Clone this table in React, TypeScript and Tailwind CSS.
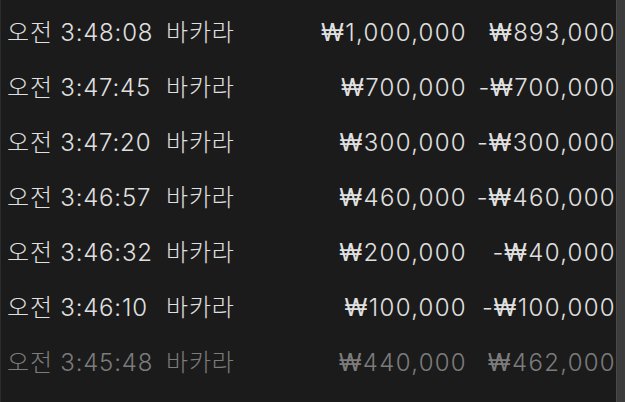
import React from 'react';

type Row = {
  time: string;
  game: string;
  bet: number;
  result: number;
  faded?: boolean;
};

const rows: Row[] = [
  { time: '오전 3:48:08', game: '바카라', bet: 1000000, result: 893000 },
  { time: '오전 3:47:45', game: '바카라', bet: 700000, result: -700000 },
  { time: '오전 3:47:20', game: '바카라', bet: 300000, result: -300000 },
  { time: '오전 3:46:57', game: '바카라', bet: 460000, result: -460000 },
  { time: '오전 3:46:32', game: '바카라', bet: 200000, result: -40000 },
  { time: '오전 3:46:10', game: '바카라', bet: 100000, result: -100000 },
  { time: '오전 3:45:48', game: '바카라', bet: 440000, result: 462000, faded: true },
];

const Won: React.FC<{ value: number }> = ({ value }) => (
  <>
    {value < 0 && <span className="tracking-[0.6px]">-</span>}
    <span className="font-normal">₩</span>
    {Math.abs(value).toLocaleString('en-US')}
  </>
);

const App: React.FC = () => {
  return (
    <div
      className="flex h-[402px] w-[625px] overflow-hidden bg-[#1b1b1b] text-[24px] font-light leading-none tracking-[0.8px]"
      style={{ fontFamily: 'Inter, "Noto Sans CJK KR", sans-serif' }}
    >
      {/* history list */}
      <div className="flex-1 overflow-hidden border-l border-[#2c2c2c] pt-[5px]">
        {rows.map((row) => (
          <div
            key={row.time}
            className={`flex h-[55px] items-center whitespace-nowrap pl-[6px] ${
              row.faded ? 'text-[#7c7c7c]' : 'text-[#e0e0e0]'
            }`}
          >
            <span className="w-[159px]">{row.time}</span>
            <span className="w-[80px]">{row.game}</span>
            <span className="w-[221px] text-right tracking-[1.3px]">
              <Won value={row.bet} />
            </span>
            <span className="flex-1 text-right tracking-[1.3px]">
              <Won value={row.result} />
            </span>
          </div>
        ))}
      </div>

      {/* scrollbar */}
      <div className="w-[9px] border-l border-[#4a4a4a] bg-[#3c3c3c]" />
    </div>
  );
};

export default App;
